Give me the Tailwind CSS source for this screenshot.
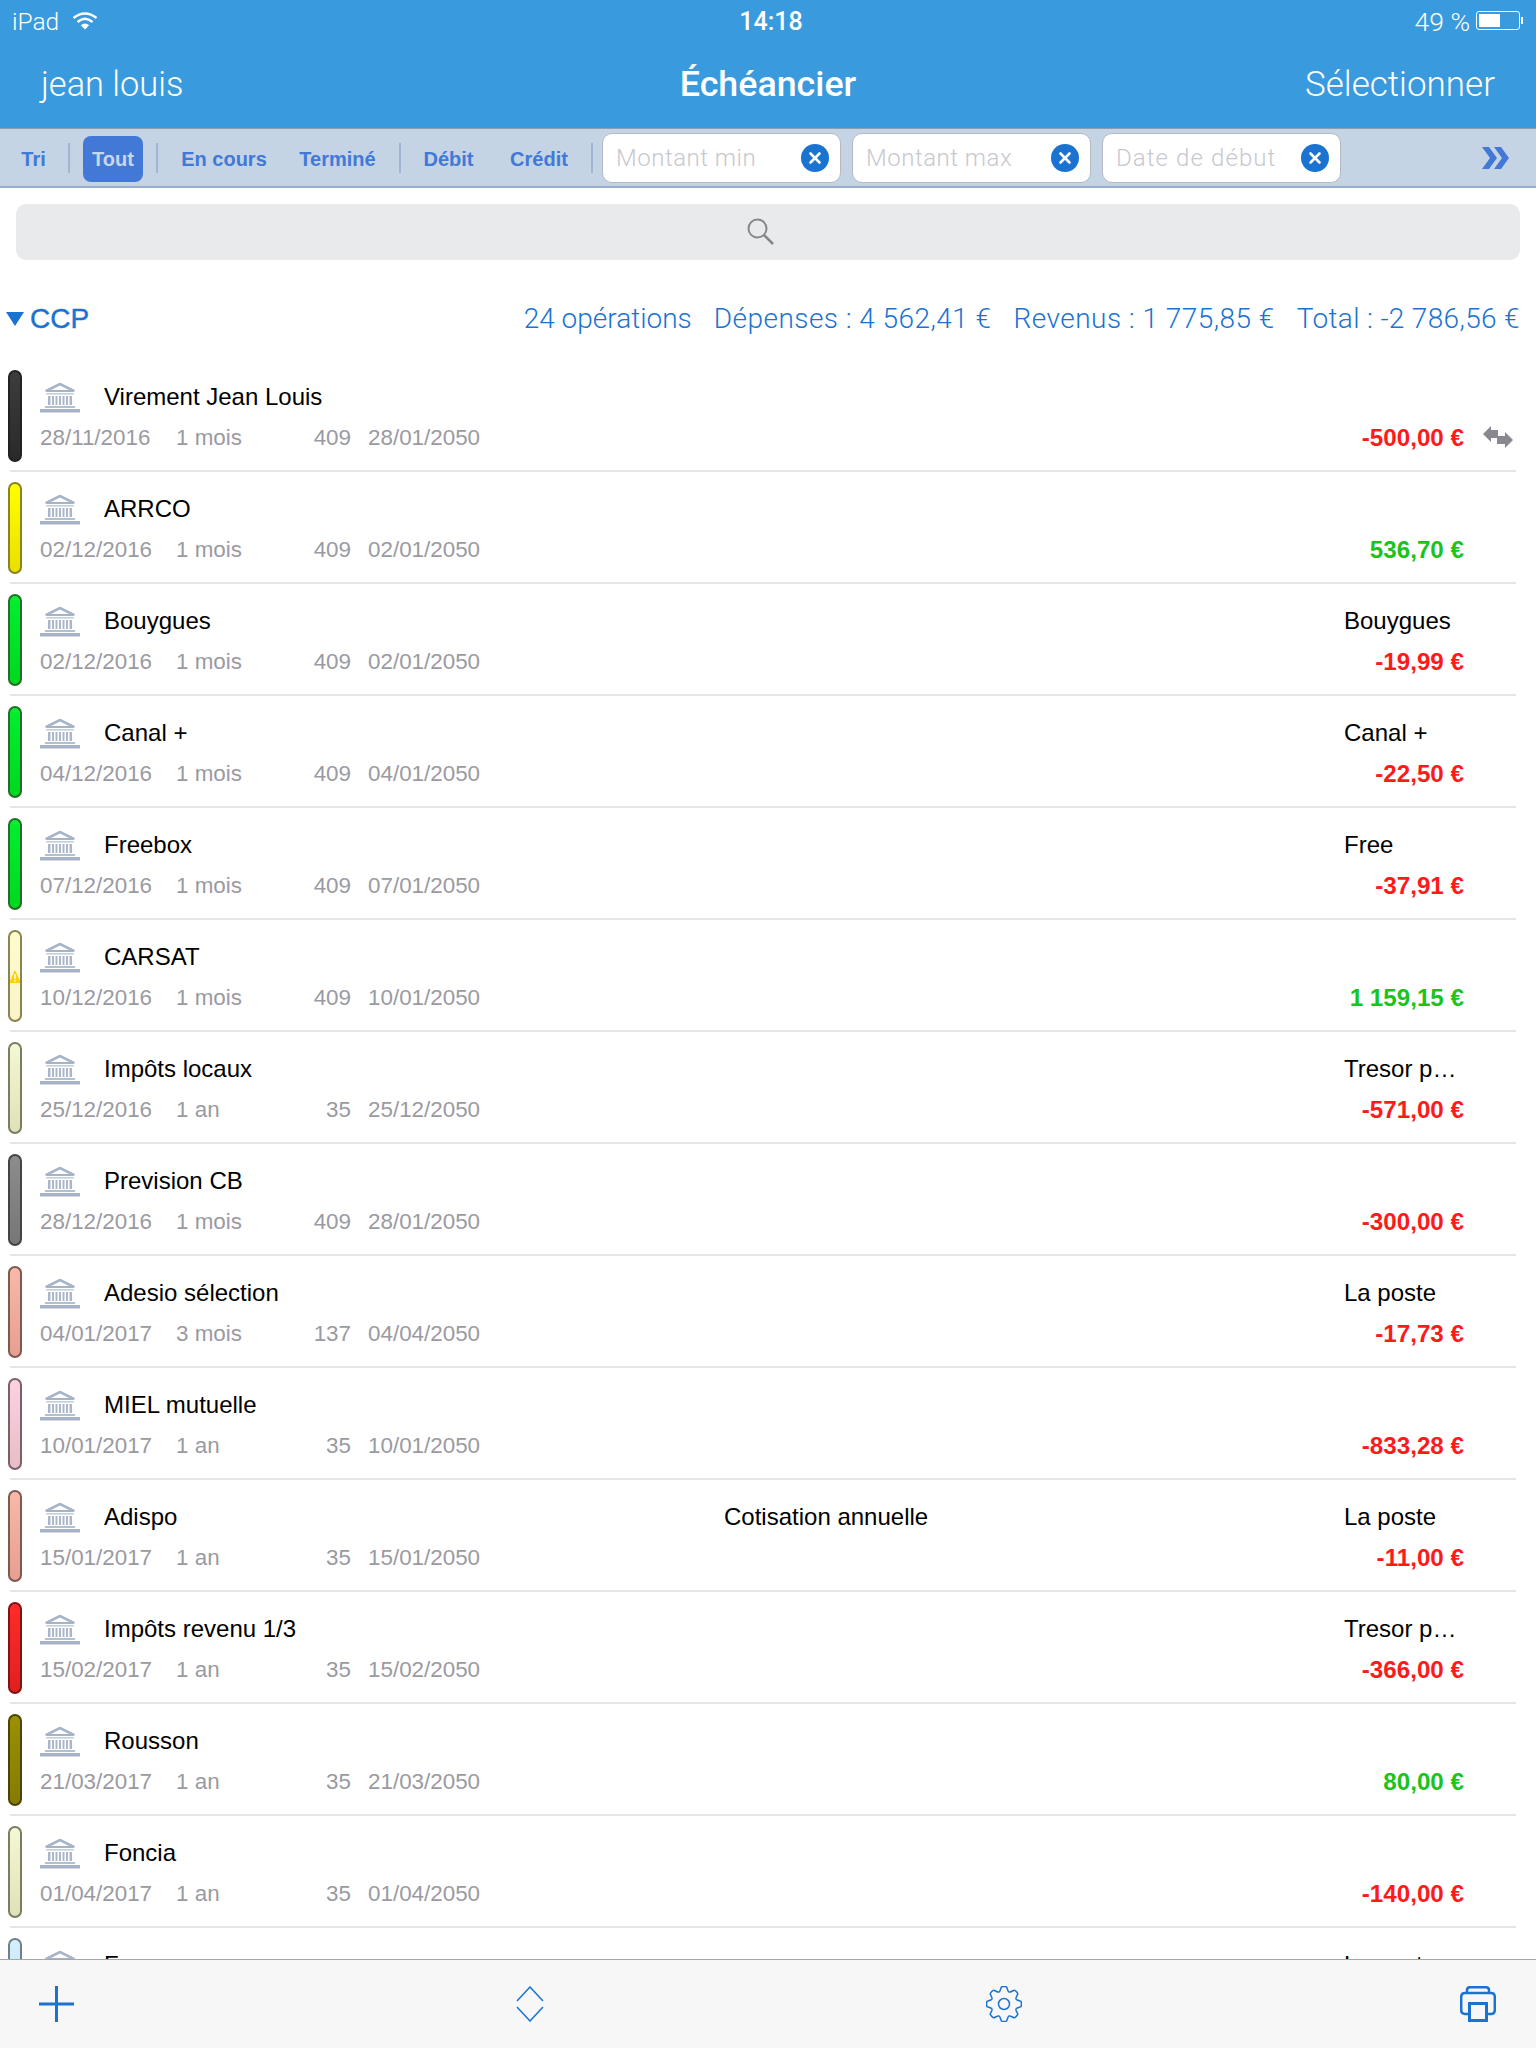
<!DOCTYPE html>
<html lang="fr">
<head>
<meta charset="utf-8">
<title>Échéancier</title>
<script src="https://cdn.jsdelivr.net/npm/@tailwindcss/browser@4"></script>
</head>
<body class="font-['Liberation_Sans',sans-serif] bg-white">
<svg width="0" height="0" class="absolute">
  <defs>
    <g id="bank">
      <path d="M20 1.5 L35 9 L34 11 L6 11 L5 9 Z M20 4.5 L11 9 L29 9 Z" fill="#a7b4c8" fill-rule="evenodd"/>
      <rect x="6" y="12" width="28" height="1.5" fill="#c3ccda"/>
      <path d="M8 15h2.5v9H8zM12 15h2v9h-2zM15.500 15h2v9h-2zM19 15h2v9h-2zM22.500 15h2v9h-2zM26 15h2v9h-2zM29.500 15h2.500v9h-2.500z" fill="#aab7ca"/>
      <rect x="5" y="25" width="30" height="2" fill="#b4bfd0"/>
      <rect x="0" y="28" width="40" height="3.500" fill="#a7b4c8"/>
    </g>
    <g id="arrows" fill="#88888e">
      <polygon points="0,8 8,0 8,4 15,4 15,12 8,12 8,16"/>
      <polygon points="30,14 22,6 22,10 14,10 14,18 22,18 22,22"/>
    </g>
    <g id="xc">
      <circle cx="14" cy="14" r="14" fill="#1a73d0"/>
      <path d="M9.500 9.500 L18.500 18.500 M18.500 9.500 L9.500 18.500" stroke="#fff" stroke-width="2.600" stroke-linecap="round"/>
    </g>
  </defs>
</svg>

<div class="w-[1536px] h-[2048px] flex flex-col overflow-hidden">
  <!-- Header -->
  <header class="bg-[#3a9ade] text-white h-[128px] shrink-0">
    <div class="h-[40px] grid grid-cols-3 items-center px-[12px] pt-[2px]">
      <div class="flex items-center gap-[13px]">
        <span class="font-['Roboto'] font-light text-[24.5px]">iPad</span>
        <svg class="-mt-[2px]" width="26" height="18" viewBox="0 0 26 18" fill="none" stroke="#fff" stroke-width="2.600">
          <path d="M1.500 6 Q13 -3 24.500 6"/>
          <path d="M5.500 10 Q13 3.500 20.500 10"/>
          <path d="M13 17.500 L8.800 13.200 Q13 10 17.200 13.200 Z" fill="#fff" stroke="none"/>
        </svg>
      </div>
      <div class="text-center text-[25px] font-['Roboto'] font-medium ml-[6px]">14:18</div>
      <div class="flex items-center justify-end gap-[6px] pr-[1px]">
        <span class="font-['Roboto'] font-light text-[26.5px]">49 %</span>
        <div class="flex items-center -mt-[2px]">
          <div class="w-[44px] h-[19px] rounded-[3px] border border-white p-[2px]">
            <div class="w-[21px] h-full bg-white"></div>
          </div>
          <div class="w-[2px] h-[7px] bg-white ml-[1px]"></div>
        </div>
      </div>
    </div>
    <div class="h-[88px] grid grid-cols-3 items-center px-[41px] pt-[2px]">
      <div class="font-['Roboto'] font-light text-[34.4px]">jean louis</div>
      <div class="text-center font-['Roboto'] font-medium text-[35.8px]">Échéancier</div>
      <div class="text-right font-['Roboto'] font-light text-[35px]">Sélectionner</div>
    </div>
  </header>

  <!-- Filter bar -->
  <div class="h-[60px] shrink-0 bg-[#c5d4e4] border-t border-t-[#8d9db0] border-b-2 border-b-[#97acd0] flex items-center text-[20px] font-bold text-[#4279d6]">
    <div class="w-[68px] text-center pr-[1px] mt-[3px]">Tri</div>
    <div class="w-[2px] h-[30px] bg-[#a0b4d4]"></div>
    <div class="ml-[13px] w-[60px] h-[46px] mt-[3px] rounded-[8px] bg-[#4279d6] text-[#c8d6ea] flex items-center justify-center">Tout</div>
    <div class="ml-[13px] w-[2px] h-[30px] bg-[#a0b4d4]"></div>
    <div class="w-[132px] text-center mt-[3px]">En cours</div>
    <div class="w-[95px] text-center mt-[3px]">Terminé</div>
    <div class="ml-[14px] w-[2px] h-[30px] bg-[#a0b4d4]"></div>
    <div class="w-[95px] text-center mt-[3px]">Débit</div>
    <div class="w-[86px] text-center mt-[3px]">Crédit</div>
    <div class="ml-[9px] w-[2px] h-[30px] bg-[#a0b4d4]"></div>
    <div class="ml-[9px] w-[239px] h-[50px] bg-white rounded-[10px] border border-[#b4bac4] flex items-center justify-between pl-[13px] pr-[11px] font-normal text-[24px] text-[#c8c8ce]">
      <span class="font-['Roboto'] font-light tracking-[0.5px]">Montant min</span>
      <svg width="28" height="28" viewBox="0 0 28 28"><use href="#xc"/></svg>
    </div>
    <div class="ml-[11px] w-[239px] h-[50px] bg-white rounded-[10px] border border-[#b4bac4] flex items-center justify-between pl-[13px] pr-[11px] font-normal text-[24px] text-[#c8c8ce]">
      <span class="font-['Roboto'] font-light tracking-[0.5px]">Montant max</span>
      <svg width="28" height="28" viewBox="0 0 28 28"><use href="#xc"/></svg>
    </div>
    <div class="ml-[11px] w-[239px] h-[50px] bg-white rounded-[10px] border border-[#b4bac4] flex items-center justify-between pl-[13px] pr-[11px] font-normal text-[24px] text-[#c8c8ce]">
      <span class="font-['Roboto'] font-light tracking-[1.1px]">Date de début</span>
      <svg width="28" height="28" viewBox="0 0 28 28"><use href="#xc"/></svg>
    </div>
    <svg class="ml-[141px] mt-[1px]" width="27" height="22" viewBox="0 0 27 22" fill="#4279d6">
      <polygon points="0,0 7,0 15,11 7,22 0,22 8,11"/>
      <polygon points="12,0 19,0 27,11 19,22 12,22 20,11"/>
    </svg>
  </div>

  <!-- Content -->
  <main class="flex-1 min-h-0 overflow-hidden">
    <div class="mt-[16px] mx-[16px] h-[56px] rounded-[10px] bg-[#e9eaec] flex items-center justify-center">
      <svg class="mr-[14px]" width="28" height="28" viewBox="0 0 28 28" fill="none" stroke="#87878b" stroke-width="2">
        <circle cx="10.500" cy="10.500" r="9"/>
        <path d="M17 17 L26 26" stroke-width="2.500"/>
      </svg>
    </div>

    <div class="h-[100px] pt-[39px] pl-[6px] pr-[16px] flex items-start justify-between text-[#1a73d0]">
      <div class="h-[40px] flex items-center">
        <svg width="18" height="14" viewBox="0 0 18 14" fill="#1a73d0"><polygon points="0,0 18,0 9,14"/></svg>
        <span class="ml-[6px] text-[28px] [-webkit-text-stroke:0.4px_#1a73d0]">CCP</span>
      </div>
      <div class="h-[40px] flex items-center gap-[22px] font-['Roboto'] font-light text-[28px]">
        <span class="tracking-[0px]">24 opérations</span>
        <span class="tracking-[0.45px]">Dépenses : 4 562,41 €</span>
        <span class="tracking-[0.45px]">Revenus : 1 775,85 €</span>
        <span class="tracking-[0.35px]">Total : -2 786,56 €</span>
      </div>
    </div>

    <!-- Rows -->
    <div class="ml-[10px] mr-[20px]">

      <div class="h-[112px] border-b-2 border-[#e5e5e5] flex">
        <div class="-ml-[2px] mt-[10px] w-[14px] h-[92px] rounded-[7px] border-2 border-[#222222] bg-linear-to-b from-[#3c3c3c] to-[#2a2a2a]"></div>
        <div class="ml-[18px] flex-1 pt-[19px]">
          <div class="h-[36px] flex items-center text-[24px] text-black">
            <svg width="40" height="32" viewBox="0 0 40 32"><use href="#bank"/></svg>
            <div class="ml-[24px] w-[620px]">Virement Jean Louis</div>
          </div>
          <div class="mt-[5px] h-[36px] flex items-center text-[22.4px] text-[#9a9aa2] pb-[1px]">
            <div class="w-[136px]">28/11/2016</div>
            <div class="w-[105px]">1 mois</div>
            <div class="w-[70px] text-right">409</div>
            <div class="ml-[17px]">28/01/2050</div>
            <div class="ml-auto mt-[1px] font-bold text-[24.2px] text-[#ff1a1a]">-500,00 €</div>
            <svg class="ml-[19px] mr-[3px] -mt-[1px]" width="30" height="22" viewBox="0 0 30 22"><use href="#arrows"/></svg>
          </div>
        </div>
      </div>

      <div class="h-[112px] border-b-2 border-[#e5e5e5] flex">
        <div class="-ml-[2px] mt-[10px] w-[14px] h-[92px] rounded-[7px] border-2 border-[#8a8320] bg-linear-to-b from-[#ffff00] to-[#eae000]"></div>
        <div class="ml-[18px] flex-1 pt-[19px]">
          <div class="h-[36px] flex items-center text-[24px] text-black">
            <svg width="40" height="32" viewBox="0 0 40 32"><use href="#bank"/></svg>
            <div class="ml-[24px] w-[620px]">ARRCO</div>
          </div>
          <div class="mt-[5px] h-[36px] flex items-center text-[22.4px] text-[#9a9aa2] pb-[1px]">
            <div class="w-[136px]">02/12/2016</div>
            <div class="w-[105px]">1 mois</div>
            <div class="w-[70px] text-right">409</div>
            <div class="ml-[17px]">02/01/2050</div>
            <div class="ml-auto mt-[1px] mr-[52px] font-bold text-[24.2px] text-[#1bc41b]">536,70 €</div>
          </div>
        </div>
      </div>

      <div class="h-[112px] border-b-2 border-[#e5e5e5] flex">
        <div class="-ml-[2px] mt-[10px] w-[14px] h-[92px] rounded-[7px] border-2 border-[#2a6a2a] bg-linear-to-b from-[#00f030] to-[#00d820]"></div>
        <div class="ml-[18px] flex-1 pt-[19px]">
          <div class="h-[36px] flex items-center text-[24px] text-black">
            <svg width="40" height="32" viewBox="0 0 40 32"><use href="#bank"/></svg>
            <div class="ml-[24px] w-[620px]">Bouygues</div>
            <div class="w-[620px]"></div>
            <div>Bouygues</div>
          </div>
          <div class="mt-[5px] h-[36px] flex items-center text-[22.4px] text-[#9a9aa2] pb-[1px]">
            <div class="w-[136px]">02/12/2016</div>
            <div class="w-[105px]">1 mois</div>
            <div class="w-[70px] text-right">409</div>
            <div class="ml-[17px]">02/01/2050</div>
            <div class="ml-auto mt-[1px] mr-[52px] font-bold text-[24.2px] text-[#ff1a1a]">-19,99 €</div>
          </div>
        </div>
      </div>

      <div class="h-[112px] border-b-2 border-[#e5e5e5] flex">
        <div class="-ml-[2px] mt-[10px] w-[14px] h-[92px] rounded-[7px] border-2 border-[#2a6a2a] bg-linear-to-b from-[#00f030] to-[#00d820]"></div>
        <div class="ml-[18px] flex-1 pt-[19px]">
          <div class="h-[36px] flex items-center text-[24px] text-black">
            <svg width="40" height="32" viewBox="0 0 40 32"><use href="#bank"/></svg>
            <div class="ml-[24px] w-[620px]">Canal +</div>
            <div class="w-[620px]"></div>
            <div>Canal +</div>
          </div>
          <div class="mt-[5px] h-[36px] flex items-center text-[22.4px] text-[#9a9aa2] pb-[1px]">
            <div class="w-[136px]">04/12/2016</div>
            <div class="w-[105px]">1 mois</div>
            <div class="w-[70px] text-right">409</div>
            <div class="ml-[17px]">04/01/2050</div>
            <div class="ml-auto mt-[1px] mr-[52px] font-bold text-[24.2px] text-[#ff1a1a]">-22,50 €</div>
          </div>
        </div>
      </div>

      <div class="h-[112px] border-b-2 border-[#e5e5e5] flex">
        <div class="-ml-[2px] mt-[10px] w-[14px] h-[92px] rounded-[7px] border-2 border-[#2a6a2a] bg-linear-to-b from-[#00f030] to-[#00d820]"></div>
        <div class="ml-[18px] flex-1 pt-[19px]">
          <div class="h-[36px] flex items-center text-[24px] text-black">
            <svg width="40" height="32" viewBox="0 0 40 32"><use href="#bank"/></svg>
            <div class="ml-[24px] w-[620px]">Freebox</div>
            <div class="w-[620px]"></div>
            <div>Free</div>
          </div>
          <div class="mt-[5px] h-[36px] flex items-center text-[22.4px] text-[#9a9aa2] pb-[1px]">
            <div class="w-[136px]">07/12/2016</div>
            <div class="w-[105px]">1 mois</div>
            <div class="w-[70px] text-right">409</div>
            <div class="ml-[17px]">07/01/2050</div>
            <div class="ml-auto mt-[1px] mr-[52px] font-bold text-[24.2px] text-[#ff1a1a]">-37,91 €</div>
          </div>
        </div>
      </div>

      <div class="h-[112px] border-b-2 border-[#e5e5e5] flex">
        <div class="relative -ml-[2px] mt-[10px] w-[14px] h-[92px] rounded-[7px] border-2 border-[#8a8450] bg-linear-to-b from-[#fffccc] to-[#f8f4c8]">
          <svg class="absolute left-0 top-[38px]" width="10" height="13" viewBox="0 0 10 13"><polygon points="5,0 10,11 10,13 0,13 0,11" fill="#ffd000"/><rect x="4.300" y="4" width="1.400" height="5" fill="#fff"/><rect x="4.300" y="10" width="1.400" height="1.500" fill="#fff"/></svg>
        </div>
        <div class="ml-[18px] flex-1 pt-[19px]">
          <div class="h-[36px] flex items-center text-[24px] text-black">
            <svg width="40" height="32" viewBox="0 0 40 32"><use href="#bank"/></svg>
            <div class="ml-[24px] w-[620px]">CARSAT</div>
          </div>
          <div class="mt-[5px] h-[36px] flex items-center text-[22.4px] text-[#9a9aa2] pb-[1px]">
            <div class="w-[136px]">10/12/2016</div>
            <div class="w-[105px]">1 mois</div>
            <div class="w-[70px] text-right">409</div>
            <div class="ml-[17px]">10/01/2050</div>
            <div class="ml-auto mt-[1px] mr-[52px] font-bold text-[24.2px] text-[#1bc41b]">1 159,15 €</div>
          </div>
        </div>
      </div>

      <div class="h-[112px] border-b-2 border-[#e5e5e5] flex">
        <div class="-ml-[2px] mt-[10px] w-[14px] h-[92px] rounded-[7px] border-2 border-[#7c7c60] bg-linear-to-b from-[#f4f8d4] to-[#dfe2b8]"></div>
        <div class="ml-[18px] flex-1 pt-[19px]">
          <div class="h-[36px] flex items-center text-[24px] text-black">
            <svg width="40" height="32" viewBox="0 0 40 32"><use href="#bank"/></svg>
            <div class="ml-[24px] w-[620px]">Impôts locaux</div>
            <div class="w-[620px]"></div>
            <div>Tresor p…</div>
          </div>
          <div class="mt-[5px] h-[36px] flex items-center text-[22.4px] text-[#9a9aa2] pb-[1px]">
            <div class="w-[136px]">25/12/2016</div>
            <div class="w-[105px]">1 an</div>
            <div class="w-[70px] text-right">35</div>
            <div class="ml-[17px]">25/12/2050</div>
            <div class="ml-auto mt-[1px] mr-[52px] font-bold text-[24.2px] text-[#ff1a1a]">-571,00 €</div>
          </div>
        </div>
      </div>

      <div class="h-[112px] border-b-2 border-[#e5e5e5] flex">
        <div class="-ml-[2px] mt-[10px] w-[14px] h-[92px] rounded-[7px] border-2 border-[#444444] bg-linear-to-b from-[#8c8c8c] to-[#777777]"></div>
        <div class="ml-[18px] flex-1 pt-[19px]">
          <div class="h-[36px] flex items-center text-[24px] text-black">
            <svg width="40" height="32" viewBox="0 0 40 32"><use href="#bank"/></svg>
            <div class="ml-[24px] w-[620px]">Prevision CB</div>
          </div>
          <div class="mt-[5px] h-[36px] flex items-center text-[22.4px] text-[#9a9aa2] pb-[1px]">
            <div class="w-[136px]">28/12/2016</div>
            <div class="w-[105px]">1 mois</div>
            <div class="w-[70px] text-right">409</div>
            <div class="ml-[17px]">28/01/2050</div>
            <div class="ml-auto mt-[1px] mr-[52px] font-bold text-[24.2px] text-[#ff1a1a]">-300,00 €</div>
          </div>
        </div>
      </div>

      <div class="h-[112px] border-b-2 border-[#e5e5e5] flex">
        <div class="-ml-[2px] mt-[10px] w-[14px] h-[92px] rounded-[7px] border-2 border-[#7c5a50] bg-linear-to-b from-[#f9b8a8] to-[#e4a090]"></div>
        <div class="ml-[18px] flex-1 pt-[19px]">
          <div class="h-[36px] flex items-center text-[24px] text-black">
            <svg width="40" height="32" viewBox="0 0 40 32"><use href="#bank"/></svg>
            <div class="ml-[24px] w-[620px]">Adesio sélection</div>
            <div class="w-[620px]"></div>
            <div>La poste</div>
          </div>
          <div class="mt-[5px] h-[36px] flex items-center text-[22.4px] text-[#9a9aa2] pb-[1px]">
            <div class="w-[136px]">04/01/2017</div>
            <div class="w-[105px]">3 mois</div>
            <div class="w-[70px] text-right">137</div>
            <div class="ml-[17px]">04/04/2050</div>
            <div class="ml-auto mt-[1px] mr-[52px] font-bold text-[24.2px] text-[#ff1a1a]">-17,73 €</div>
          </div>
        </div>
      </div>

      <div class="h-[112px] border-b-2 border-[#e5e5e5] flex">
        <div class="-ml-[2px] mt-[10px] w-[14px] h-[92px] rounded-[7px] border-2 border-[#7c6068] bg-linear-to-b from-[#fbd2de] to-[#e6bec8]"></div>
        <div class="ml-[18px] flex-1 pt-[19px]">
          <div class="h-[36px] flex items-center text-[24px] text-black">
            <svg width="40" height="32" viewBox="0 0 40 32"><use href="#bank"/></svg>
            <div class="ml-[24px] w-[620px]">MIEL mutuelle</div>
          </div>
          <div class="mt-[5px] h-[36px] flex items-center text-[22.4px] text-[#9a9aa2] pb-[1px]">
            <div class="w-[136px]">10/01/2017</div>
            <div class="w-[105px]">1 an</div>
            <div class="w-[70px] text-right">35</div>
            <div class="ml-[17px]">10/01/2050</div>
            <div class="ml-auto mt-[1px] mr-[52px] font-bold text-[24.2px] text-[#ff1a1a]">-833,28 €</div>
          </div>
        </div>
      </div>

      <div class="h-[112px] border-b-2 border-[#e5e5e5] flex">
        <div class="-ml-[2px] mt-[10px] w-[14px] h-[92px] rounded-[7px] border-2 border-[#7c5a50] bg-linear-to-b from-[#f9b8a8] to-[#e4a090]"></div>
        <div class="ml-[18px] flex-1 pt-[19px]">
          <div class="h-[36px] flex items-center text-[24px] text-black">
            <svg width="40" height="32" viewBox="0 0 40 32"><use href="#bank"/></svg>
            <div class="ml-[24px] w-[620px]">Adispo</div>
            <div class="w-[620px]">Cotisation annuelle</div>
            <div>La poste</div>
          </div>
          <div class="mt-[5px] h-[36px] flex items-center text-[22.4px] text-[#9a9aa2] pb-[1px]">
            <div class="w-[136px]">15/01/2017</div>
            <div class="w-[105px]">1 an</div>
            <div class="w-[70px] text-right">35</div>
            <div class="ml-[17px]">15/01/2050</div>
            <div class="ml-auto mt-[1px] mr-[52px] font-bold text-[24.2px] text-[#ff1a1a]">-11,00 €</div>
          </div>
        </div>
      </div>

      <div class="h-[112px] border-b-2 border-[#e5e5e5] flex">
        <div class="-ml-[2px] mt-[10px] w-[14px] h-[92px] rounded-[7px] border-2 border-[#801414] bg-linear-to-b from-[#ff2b2b] to-[#e02020]"></div>
        <div class="ml-[18px] flex-1 pt-[19px]">
          <div class="h-[36px] flex items-center text-[24px] text-black">
            <svg width="40" height="32" viewBox="0 0 40 32"><use href="#bank"/></svg>
            <div class="ml-[24px] w-[620px]">Impôts revenu 1/3</div>
            <div class="w-[620px]"></div>
            <div>Tresor p…</div>
          </div>
          <div class="mt-[5px] h-[36px] flex items-center text-[22.4px] text-[#9a9aa2] pb-[1px]">
            <div class="w-[136px]">15/02/2017</div>
            <div class="w-[105px]">1 an</div>
            <div class="w-[70px] text-right">35</div>
            <div class="ml-[17px]">15/02/2050</div>
            <div class="ml-auto mt-[1px] mr-[52px] font-bold text-[24.2px] text-[#ff1a1a]">-366,00 €</div>
          </div>
        </div>
      </div>

      <div class="h-[112px] border-b-2 border-[#e5e5e5] flex">
        <div class="-ml-[2px] mt-[10px] w-[14px] h-[92px] rounded-[7px] border-2 border-[#4a4400] bg-linear-to-b from-[#9a9000] to-[#857c00]"></div>
        <div class="ml-[18px] flex-1 pt-[19px]">
          <div class="h-[36px] flex items-center text-[24px] text-black">
            <svg width="40" height="32" viewBox="0 0 40 32"><use href="#bank"/></svg>
            <div class="ml-[24px] w-[620px]">Rousson</div>
          </div>
          <div class="mt-[5px] h-[36px] flex items-center text-[22.4px] text-[#9a9aa2] pb-[1px]">
            <div class="w-[136px]">21/03/2017</div>
            <div class="w-[105px]">1 an</div>
            <div class="w-[70px] text-right">35</div>
            <div class="ml-[17px]">21/03/2050</div>
            <div class="ml-auto mt-[1px] mr-[52px] font-bold text-[24.2px] text-[#1bc41b]">80,00 €</div>
          </div>
        </div>
      </div>

      <div class="h-[112px] border-b-2 border-[#e5e5e5] flex">
        <div class="-ml-[2px] mt-[10px] w-[14px] h-[92px] rounded-[7px] border-2 border-[#7c7c60] bg-linear-to-b from-[#f4f8d4] to-[#dfe2b8]"></div>
        <div class="ml-[18px] flex-1 pt-[19px]">
          <div class="h-[36px] flex items-center text-[24px] text-black">
            <svg width="40" height="32" viewBox="0 0 40 32"><use href="#bank"/></svg>
            <div class="ml-[24px] w-[620px]">Foncia</div>
          </div>
          <div class="mt-[5px] h-[36px] flex items-center text-[22.4px] text-[#9a9aa2] pb-[1px]">
            <div class="w-[136px]">01/04/2017</div>
            <div class="w-[105px]">1 an</div>
            <div class="w-[70px] text-right">35</div>
            <div class="ml-[17px]">01/04/2050</div>
            <div class="ml-auto mt-[1px] mr-[52px] font-bold text-[24.2px] text-[#ff1a1a]">-140,00 €</div>
          </div>
        </div>
      </div>

      <div class="h-[112px] flex">
        <div class="-ml-[2px] mt-[10px] w-[14px] h-[92px] rounded-[7px] border-2 border-[#708088] bg-linear-to-b from-[#d4f0ff] to-[#c0dcea]"></div>
        <div class="ml-[18px] flex-1 pt-[19px]">
          <div class="h-[36px] flex items-center text-[24px] text-black">
            <svg width="40" height="32" viewBox="0 0 40 32"><use href="#bank"/></svg>
            <div class="ml-[24px] w-[620px]">Free</div>
            <div class="w-[620px]"></div>
            <div>La poste</div>
          </div>
        </div>
      </div>
    </div>
  </main>

  <!-- Bottom toolbar -->
  <footer class="h-[89px] shrink-0 bg-[#f7f7f8] border-t border-[#a8a8a8] flex items-center pl-[39px] text-[#1a73d0]">
    <svg width="35" height="36" viewBox="0 0 35 36" fill="none" stroke="currentColor" stroke-width="3">
      <path d="M17.500 0 V36 M0 18 H35"/>
    </svg>
    <svg class="ml-[442px]" width="28" height="36" viewBox="0 0 28 36" fill="none" stroke="currentColor" stroke-width="1.500">
      <path d="M1 15 L14 1 L27 15"/>
      <path d="M1 21 L14 35 L27 21"/>
    </svg>
    <svg class="ml-[442px]" width="36" height="36" viewBox="0 0 36 36" fill="none" stroke="currentColor" stroke-width="1.500">
      <g id="tooth"><path d="M13.030 5.990 C14.500 5.500 14.800 1.500 15.560 .9 Q18 .2 20.440 .9 C21.200 1.500 21.500 5.500 22.970 5.990"/></g>
      <use href="#tooth" transform="rotate(45 18 18)"/>
      <use href="#tooth" transform="rotate(90 18 18)"/>
      <use href="#tooth" transform="rotate(135 18 18)"/>
      <use href="#tooth" transform="rotate(180 18 18)"/>
      <use href="#tooth" transform="rotate(225 18 18)"/>
      <use href="#tooth" transform="rotate(270 18 18)"/>
      <use href="#tooth" transform="rotate(315 18 18)"/>
      <circle cx="18" cy="18" r="5.500"/>
    </svg>
    <svg class="ml-[438px]" width="36" height="36" viewBox="0 0 36 36" fill="none" stroke="currentColor" stroke-width="2.500">
      <path d="M7 7 V4 Q7 1.200 10 1.200 H26 Q29 1.200 29 4 V7"/>
      <path d="M8 28 H5 Q1.200 28 1.200 24 V11 Q1.200 7 5 7 H31 Q34.800 7 34.800 11 V24 Q34.800 28 31 28 H28"/>
      <rect x="9.500" y="17.500" width="17" height="17" stroke-width="3"/>
    </svg>
  </footer>
</div>
</body>
</html>
